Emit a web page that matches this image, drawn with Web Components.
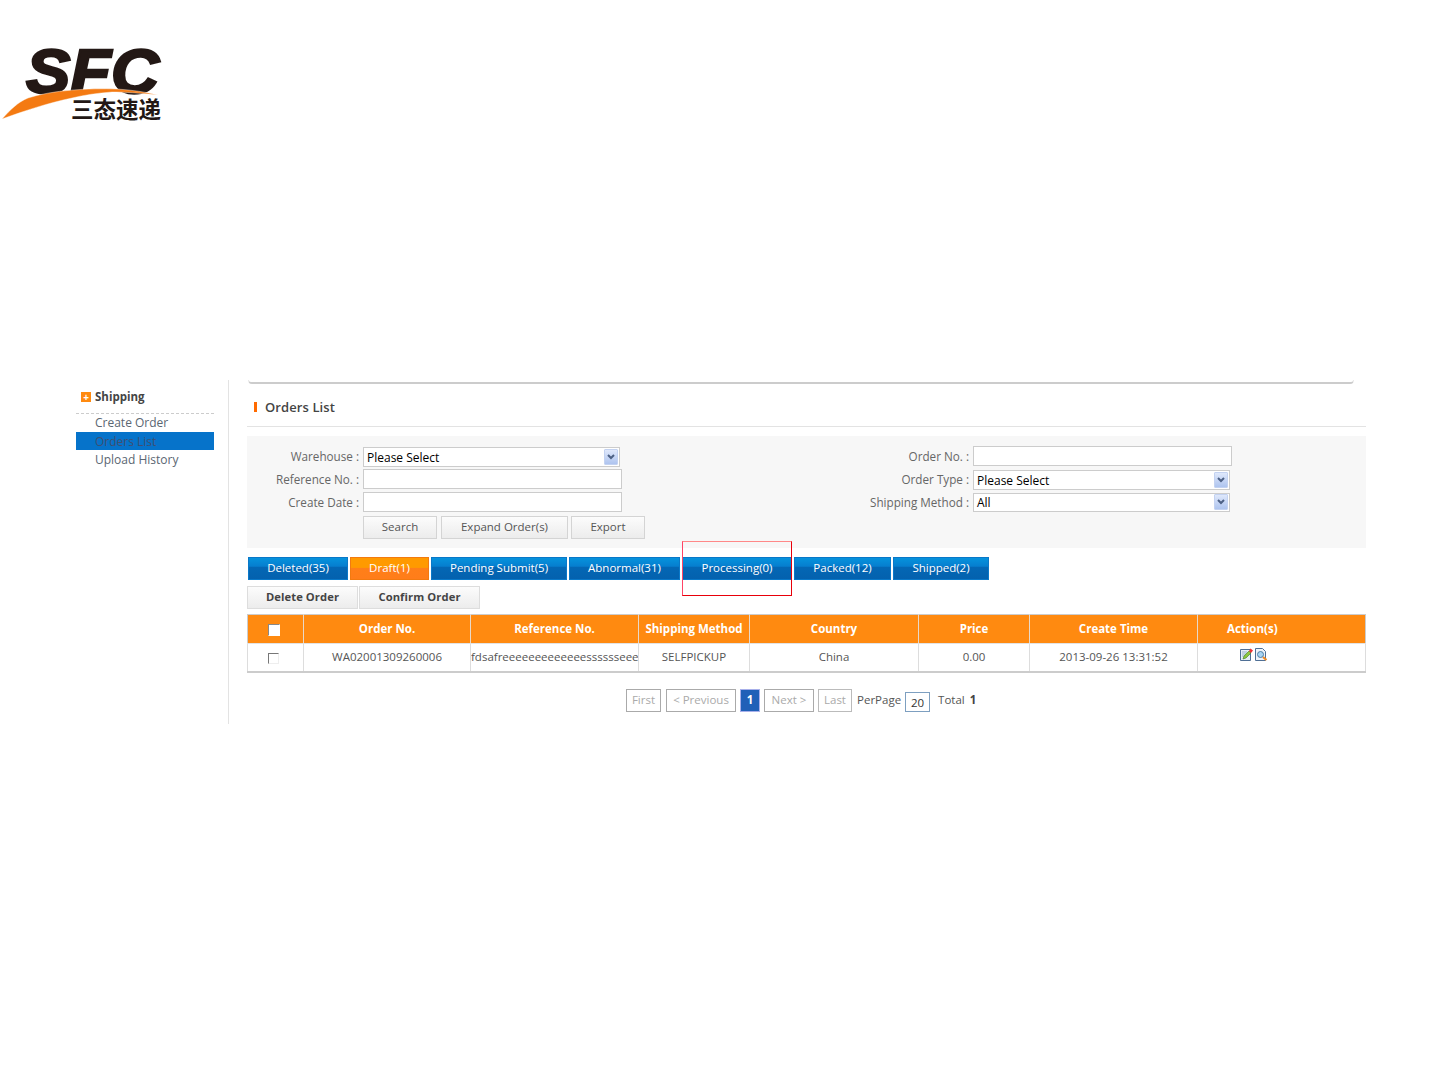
<!DOCTYPE html>
<html lang="en"><head><meta charset="utf-8"><title>Orders List</title>
<style>
html,body{margin:0;padding:0;background:#fff}
body{font:12px "Open Sans","Noto Sans CJK SC",sans-serif;color:#555}
</style></head><body>
<sf-page></sf-page>
<script>
function def(name,html){
  customElements.define(name,class extends HTMLElement{
    constructor(){super();this.attachShadow({mode:'open'}).innerHTML=html;}
  });
}
const FONT='"Open Sans","Noto Sans CJK SC",sans-serif';
def('sf-logo',`<style>:host{display:block;height:380px}svg{display:block}</style>
<svg width="180" height="130" viewBox="0 0 180 130">
<text x="26" y="93" font-family="Liberation Sans" font-weight="700" font-style="italic" font-size="63" textLength="133" lengthAdjust="spacingAndGlyphs" fill="#231815" stroke="#231815" stroke-width="2.400">SFC</text>
<path d="M2 119C10 110 18 102 28 98C52 90 90 88 117 89C132 90 146 92 158 95C140 93 124 92 112 92C98 93 84 95 72 98C48 103 24 111 2 119Z" fill="#f47a12" stroke="#fff" stroke-width=".4"/>
<text x="71" y="117.500" font-family="Noto Sans CJK SC" font-weight="700" font-size="22.500" textLength="90" fill="#231815">三态速递</text>
</svg>`);
def('sf-sidebar',`<style>
:host{display:block;width:229px;box-sizing:border-box;border-right:1px solid #e3e3e3;padding:0 14px 0 76px;font:12px/18px ${FONT};color:#5a6672}
.h{display:flex;align-items:center;height:34px;box-sizing:border-box;border-bottom:1px dashed #ccc;padding:1px 0 0 5px;font-weight:700;font-size:11.500px;color:#444}
.p{width:10px;height:10px;background:#ff8a10;color:#fff;margin-right:4px;display:flex;align-items:center;justify-content:center;font:700 10px/10px ${FONT}}
.i{padding:1px 0 0 19px;height:18px;line-height:18px}
.i.f{height:18px;padding-top:0}
.i.a{height:17px;background:#0673ca;color:#3f4f72}
</style>
<div class="h"><span class="p">+</span>Shipping</div>
<div class="i f">Create Order</div><div class="i a">Orders List</div><div class="i">Upload History</div>`);
def('sf-title',`<style>
:host{display:block;height:46px;border-bottom:1px solid #e3e3e3;margin-bottom:9px}
.strip{margin:0 12px 0 1px;border:1px solid #ccc;border-top:0;border-left-color:#e8e8e8;border-right-color:#e8e8e8;border-radius:0 0 6px 6px;border-bottom-width:2px;box-sizing:border-box;height:4px}
.t{display:flex;align-items:center;height:38px;margin-top:4px;padding-left:7px;font:600 13px ${FONT};letter-spacing:.1px;color:#444}
.b{width:3px;height:10px;background:#ff6a00;margin-right:8px}
</style><div class="strip"></div><div class="t"><span class="b"></span><slot></slot></div>`);
def('sf-field',`<style>
:host{display:flex;align-items:center;font:11.700px ${FONT};color:#666}
.l{width:112px;text-align:right;white-space:nowrap;margin-right:4px;padding-bottom:var(--lift,0)}
</style><span class="l"><slot name="label"></slot></span><slot></slot>`);
def('sf-input',`<style>
:host{display:block;box-sizing:border-box;width:259px;height:20px;background:#fff;border:1px solid #ccc}
</style>`);
def('sf-select',`<style>
:host{display:flex;align-items:center;box-sizing:border-box;width:257px;height:20px;background:#fff;border:1px solid #ccc;padding:1px 1px 0 3px;font:12px ${FONT};color:#000}
.t{flex:1}
.a{width:14px;height:16px;background:linear-gradient(#dfe8fb,#aec4ef);border:1px solid #c3d2f1;box-sizing:border-box;border-radius:1px;display:flex;align-items:center;justify-content:center;margin-top:-1px}
</style><span class="t"><slot></slot></span><span class="a"><svg width="8" height="6" viewBox="0 0 8 6"><path d="M1 1l3 3 3-3" fill="none" stroke="#4d6185" stroke-width="2"/></svg></span>`);
def('sf-button',`<style>
:host{display:inline-flex;align-items:center;justify-content:center;box-sizing:border-box;height:23px;padding-bottom:3px;border:1px solid #d4d4d4;background:linear-gradient(#fcfcfc,#ececec);font:11.500px ${FONT};color:#555;white-space:nowrap}
:host([bold]){font-weight:700;font-size:11.200px;color:#444;border-color:#ddd;letter-spacing:.1px}
</style><slot></slot>`);
def('sf-filter',`<style>
:host{display:flex;height:112px;background:#f7f7f7;box-sizing:border-box}
.c{width:610px;padding-top:11px}.r{padding-top:10px}
.b{display:flex;margin:4px 0 0 116px}
</style>
<div class="c"><slot name="left"></slot><div class="b"><slot name="btn"></slot></div></div>
<div class="r"><slot name="right"></slot></div>`);
def('sf-tab',`<style>
:host{display:flex;align-items:center;justify-content:center;box-sizing:border-box;height:23px;padding-bottom:3px;border:1px solid #0a78c8;background:linear-gradient(#0692dc 0,#067ecf 40%,#0467b5 42%,#0461ae 100%);color:#fff;font:11.500px ${FONT};white-space:nowrap}
:host([active]){background:linear-gradient(#ff9a00 0,#ff9a00 45%,#ff7f18 47%,#ff7d1a 100%);border-color:#f27a10}
</style><slot></slot>`);
def('sf-tabs',`<style>
:host{display:block;position:relative;margin-top:9px;height:23px}
.w{display:grid;grid-template-columns:100px 79px 136px 111px 110px 97px 96px;column-gap:2px;padding-left:1px;width:max-content}
.red{position:absolute;left:435px;top:-16px;width:110px;height:55px;box-sizing:border-box;border:1px solid #e8000a;border-top-color:#f88;border-left-color:#f46;pointer-events:none}
</style><div class="w"><slot></slot></div><div class="red"></div>`);
def('sf-actions',`<style>
:host{display:flex;margin-top:6px;height:23px;gap:1px}
</style><slot></slot>`);
def('sf-orders',`<style>
:host{display:block;margin-top:5px;width:1119px}
table{border-collapse:collapse;table-layout:fixed;width:1119px;font:11.500px ${FONT};color:#555;border-bottom:2px solid #ccc}
th{height:29px;padding:0 0 2px;background:#ff8a10;color:#fff;font-weight:700;font-size:11.500px;border:1px solid #e8d8c8;border-top-color:#ccc;border-bottom-color:#e3e3e3;white-space:nowrap;box-sizing:border-box}
th:first-child{border-left-color:#ccc}th:last-child{border-right-color:#ccc;text-align:left;padding-left:29px}
td{height:28px;box-sizing:border-box;padding:0 0 1px;text-align:center;border:1px solid #ddd;border-bottom:0;white-space:nowrap;overflow:hidden}
td.l{text-align:left}
.cb{display:inline-block;box-sizing:border-box;width:11px;height:11px;margin:2px 4px 0 0;border:1px solid #777;border-right-color:#eee;border-bottom-color:#eee;background:#fff;vertical-align:middle}
th .cb{border-color:#888 #fff #fff #888;width:12px;height:12px;margin-right:3px}
.ic{display:flex;gap:2px;margin:-5px 0 0 42px}
</style>
<table>
<colgroup><col style="width:56px"><col style="width:167px"><col style="width:168px"><col style="width:111px"><col style="width:169px"><col style="width:111px"><col style="width:168px"><col style="width:168px"></colgroup>
<thead><tr><th><span class="cb"></span></th><th>Order No.</th><th>Reference No.</th><th>Shipping Method</th><th>Country</th><th>Price</th><th>Create Time</th><th>Action(s)</th></tr></thead>
<tbody><tr><td><span class="cb"></span></td><td>WA02001309260006</td><td class="l">fdsafreeeeeeeeeeeeesssssseeeeeeerrr</td><td>SELFPICKUP</td><td>China</td><td>0.00</td><td>2013-09-26 13:31:52</td>
<td><div class="ic">
<svg width="13" height="13" viewBox="0 0 13 13"><path d="M.5 1.500h10v11H.5z" fill="#e4ecf5" stroke="#4f6f95"/><path d="M2 4h5M2 6h4M2 8h3" stroke="#9db3cc"/><path d="M3 11l1-3 5-5 2 2-5 5z" fill="#8cc63f" stroke="#3f7a1f" stroke-width=".6"/><path d="M9 3l1.500-2.500 2.500 2-2 2.500z" fill="#e33"/></svg>
<svg width="13" height="13" viewBox="0 0 13 13"><path d="M.5.500h7l3 3v9h-10z" fill="#eef3f9" stroke="#4f6f95"/><circle cx="5.500" cy="6.500" r="3" fill="#a8d4f2" stroke="#4f7fa5"/><path d="M8 9l3.500 3" stroke="#f08a24" stroke-width="2.200"/></svg>
</div></td></tr></tbody></table>`);
def('sf-pager',`<style>
:host{display:flex;align-items:flex-start;margin:16px 0 0 379px;height:35px;font:11.500px ${FONT};color:#555;white-space:nowrap}
.b{display:flex;align-items:center;justify-content:center;box-sizing:border-box;height:23px;padding-bottom:2px;border:1px solid #aaa;color:#aaa}
.n{background:#2060b8;border-color:#a8b0ea;color:#fff;font-weight:700}
.t{height:23px;line-height:22px}
.i{box-sizing:border-box;width:25px;height:20px;margin:3px 8px 0 4px;border:1px solid #7d9fc0;text-align:center;line-height:19px;color:#333}
</style>
<span class="b" style="width:35px">First</span>
<span class="b" style="width:70px;margin-left:5px">&lt; Previous</span>
<span class="b n" style="width:20px;margin-left:4px">1</span>
<span class="b" style="width:50px;margin-left:4px">Next &gt;</span>
<span class="b" style="width:34px;margin-left:4px;border-color:#bbb">Last</span>
<span class="t" style="margin-left:5px">PerPage</span>
<span class="i">20</span>
<span class="t">Total</span>
<b class="t" style="margin-left:5px;color:#444">1</b>`);
def('sf-page',`<style>
:host{display:block;width:1440px;height:1080px;overflow:hidden}
.m{display:flex;height:344px}
.c{margin-left:18px;width:1119px}
</style>
<sf-logo></sf-logo>
<div class="m"><sf-sidebar></sf-sidebar><div class="c">
<sf-title>Orders List</sf-title>
<sf-filter>
<sf-field slot="left" style="--lift:2px"><span slot="label">Warehouse :</span><sf-select>Please Select</sf-select></sf-field>
<sf-field slot="left" style="margin-top:2px"><span slot="label">Reference No. :</span><sf-input></sf-input></sf-field>
<sf-field slot="left" style="margin-top:3px;--lift:1px"><span slot="label">Create Date :</span><sf-input></sf-input></sf-field>
<sf-button slot="btn" style="width:74px">Search</sf-button>
<sf-button slot="btn" style="width:127px;margin-left:4px">Expand Order(s)</sf-button>
<sf-button slot="btn" style="width:74px;margin-left:3px">Export</sf-button>
<sf-field slot="right"><span slot="label">Order No. :</span><sf-input></sf-input></sf-field>
<sf-field slot="right" style="margin-top:4px;--lift:2px"><span slot="label">Order Type :</span><sf-select>Please Select</sf-select></sf-field>
<sf-field slot="right" style="margin-top:3px;--lift:2px"><span slot="label">Shipping Method :</span><sf-select style="height:19px;padding-top:0">All</sf-select></sf-field>
</sf-filter>
<sf-tabs><sf-tab>Deleted(35)</sf-tab><sf-tab active>Draft(1)</sf-tab><sf-tab>Pending Submit(5)</sf-tab><sf-tab>Abnormal(31)</sf-tab><sf-tab>Processing(0)</sf-tab><sf-tab>Packed(12)</sf-tab><sf-tab>Shipped(2)</sf-tab></sf-tabs>
<sf-actions><sf-button bold style="width:111px">Delete Order</sf-button><sf-button bold style="width:121px">Confirm Order</sf-button></sf-actions>
<sf-orders></sf-orders>
<sf-pager></sf-pager>
</div></div>`);
</script>
</body></html>
